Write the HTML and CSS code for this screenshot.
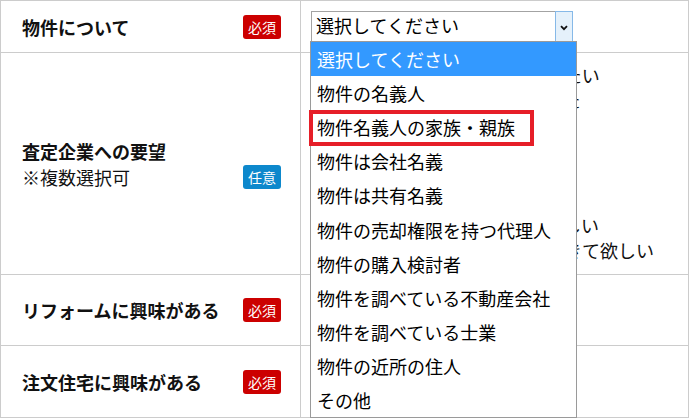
FILE: index.html
```html
<!DOCTYPE html>
<html lang="ja">
<head>
<meta charset="utf-8">
<title>査定フォーム</title>
<link rel="stylesheet" href="styles.css">
</head>
<body>
<div class="form">
  <div class="row row-1">
    <div class="label-cell">
      <div class="label-inner">
        <div class="label"><div class="label-main">物件について</div></div>
        <span class="badge badge-req">必須</span>
      </div>
    </div>
    <div class="field-cell field-select">
      <div class="select">
        <span class="select-value">選択してください</span>
        <span class="select-arrow"><svg width="8" height="6" viewBox="0 0 8 6"><path d="M1 1.2 L4 4.2 L7 1.2" fill="none" stroke="#111" stroke-width="1.8"/></svg></span>
      </div>
    </div>
  </div>

  <div class="row row-2">
    <div class="label-cell">
      <div class="label-inner">
        <div class="label">
          <div class="label-main">査定企業への要望</div>
          <div class="label-sub">※複数選択可</div>
        </div>
        <span class="badge badge-opt">任意</span>
      </div>
    </div>
    <div class="field-cell field-checks">
      <div class="check-item"><span class="checkbox"></span><span class="check-text">できるだけ早く高値で売却したい</span></div>
      <div class="check-item"><span class="checkbox"></span><span class="check-text">まず相場を知っておきたかった</span></div>
      <div class="check-item"><span class="checkbox"></span></div>
      <div class="check-item"><span class="checkbox"></span></div>
      <div class="check-item"><span class="checkbox"></span></div>
      <div class="check-item"><span class="checkbox"></span></div>
      <div class="check-item"><span class="checkbox"></span><span class="check-text">売却の流れを詳しく教えて欲しい</span></div>
      <div class="check-item"><span class="checkbox"></span><span class="check-text">複数社の査定額を比較検討できて欲しい</span></div>
    </div>
  </div>

  <div class="row row-3">
    <div class="label-cell">
      <div class="label-inner">
        <div class="label"><div class="label-main">リフォームに興味がある</div></div>
        <span class="badge badge-req">必須</span>
      </div>
    </div>
    <div class="field-cell"></div>
  </div>

  <div class="row row-4">
    <div class="label-cell">
      <div class="label-inner">
        <div class="label"><div class="label-main">注文住宅に興味がある</div></div>
        <span class="badge badge-req">必須</span>
      </div>
    </div>
    <div class="field-cell"></div>
  </div>

  <ul class="dropdown">
    <li class="option is-selected">選択してください</li>
    <li class="option">物件の名義人</li>
    <li class="option">物件名義人の家族・親族</li>
    <li class="option">物件は会社名義</li>
    <li class="option">物件は共有名義</li>
    <li class="option">物件の売却権限を持つ代理人</li>
    <li class="option">物件の購入検討者</li>
    <li class="option">物件を調べている不動産会社</li>
    <li class="option">物件を調べている士業</li>
    <li class="option">物件の近所の住人</li>
    <li class="option">その他</li>
  </ul>

  <div class="annotation"></div>
</div>
</body>
</html>
```
FILE: styles.css
```css
html, body {
  margin: 0;
  padding: 0;
  background: #fff;
}

body {
  font-family: "Noto Sans CJK JP", "Noto Sans", sans-serif;
  color: #111;
}

.form {
  position: relative;
  width: 689px;
  box-sizing: border-box;
  border-top: 1px solid #cccccc;
  border-left: 1px solid #cccccc;
  border-right: 1px solid #cccccc;
}

.row {
  display: grid;
  grid-template-columns: 300px 1fr;
  border-bottom: 1px solid #cccccc;
}

.row-1 { height: 51px; }
.row-2 { height: 221px; }
.row-3 { height: 70px; }
.row-4 { height: 71px; }

.label-cell {
  display: flex;
  align-items: center;
  box-sizing: border-box;
  padding: 0 19px 0 21px;
  border-right: 1px solid #cccccc;
}

.label-inner {
  display: flex;
  align-items: flex-end;
  justify-content: space-between;
  width: 100%;
}

.label-main {
  font-size: 18px;
  font-weight: 700;
  line-height: 26px;
  white-space: nowrap;
}

.label-sub {
  font-size: 18px;
  font-weight: 400;
  line-height: 26px;
  white-space: nowrap;
}

.badge {
  display: flex;
  align-items: center;
  justify-content: center;
  width: 38px;
  height: 24px;
  margin-bottom: 1px;
  border-radius: 3px;
  color: #fff;
  font-size: 14px;
  line-height: 1;
  flex-shrink: 0;
}

.badge-req { background: #cc0000; }
.badge-opt { background: #0d88cc; }

.field-cell {
  padding-left: 10px;
  font-size: 18px;
}

.field-select {
  padding-top: 10px;
}

.select {
  display: flex;
  width: 262px;
  height: 31px;
  box-sizing: border-box;
  border: 1px solid #a3a3a3;
  background: #fff;
}

.select-value {
  flex: 1;
  padding-left: 4px;
  font-size: 18px;
  line-height: 26px;
  color: #000;
  white-space: nowrap;
}

.select-arrow {
  display: flex;
  align-items: center;
  justify-content: center;
  width: 18px;
  margin: -1px -1px -1px 0;
  padding-top: 3px;
  box-sizing: border-box;
  background: #e5f1fb;
  border: 1px solid #86b9e8;
}

.field-checks {
  display: flex;
  flex-direction: column;
  justify-content: center;
  padding-bottom: 2px;
}

.check-item {
  display: flex;
  align-items: center;
  gap: 6px;
  height: 25px;
  line-height: 25px;
  white-space: nowrap;
}

.checkbox {
  width: 13px;
  height: 13px;
  box-sizing: border-box;
  border: 1px solid #767676;
  border-radius: 2px;
  background: #fff;
}

.dropdown {
  position: absolute;
  left: 309px;
  top: 40px;
  width: 267px;
  height: 377px;
  box-sizing: border-box;
  margin: 0;
  padding: 0;
  list-style: none;
  border: 1px solid #9a9a9a;
  background: #fff;
  display: flex;
  flex-direction: column;
  z-index: 2;
}

.option {
  flex: 1;
  display: flex;
  align-items: center;
  padding-left: 6px;
  font-size: 18px;
  color: #000;
  white-space: nowrap;
}

.option.is-selected {
  background: #3399ff;
  color: #fff;
}

.annotation {
  position: absolute;
  left: 308px;
  top: 109px;
  width: 225px;
  height: 36px;
  box-sizing: border-box;
  border: 4px solid #e61e28;
  z-index: 3;
}
```
